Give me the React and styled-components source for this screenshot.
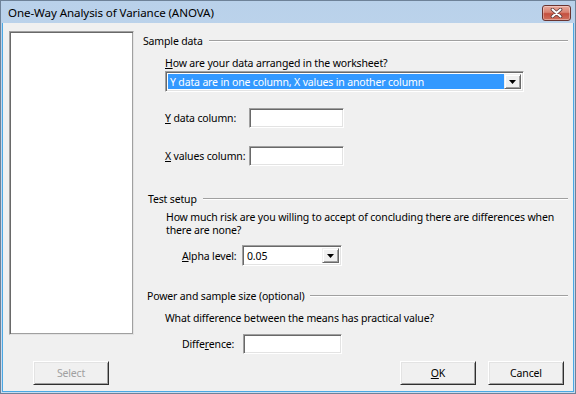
import React from 'react';
import styled, { createGlobalStyle } from 'styled-components';

const Global = createGlobalStyle`
  html, body { margin: 0; padding: 0; background: #fff; }
  body { font-family: "Noto Sans", "DejaVu Sans", sans-serif; color: #000; }
  u { text-decoration: underline; text-underline-offset: 1px; }
`;

const Window = styled.div`
  width: 576px;
  height: 394px;
  box-sizing: border-box;
  border: 1px solid #6e8298;
  padding: 0 1px 1px;
  background: linear-gradient(#b9d1ea, #c3d7ed 30%, #cadcf0);
  display: flex;
  flex-direction: column;
  overflow: hidden;
`;

const TitleBar = styled.div`
  height: 22px;
  flex: none;
  display: flex;
  align-items: center;
  justify-content: space-between;
  padding: 0 3px 0 6px;
`;

const Title = styled.div`
  font-size: 11.6px;
  line-height: 16px;
  padding-top: 2px;
  letter-spacing: -0.1px;
`;

const CloseButton = styled.div`
  width: 29px;
  height: 16px;
  box-sizing: border-box;
  border: 1px solid #6a3430;
  border-radius: 3px;
  background: linear-gradient(#e9aa9d, #d88271 45%, #c4503f 55%, #d0705d);
  box-shadow: inset 0 0 0 1px rgba(255, 255, 255, 0.35);
  display: flex;
  align-items: center;
  justify-content: center;
  margin-top: 2px;
`;

const Client = styled.div`
  flex: 1;
  min-height: 0;
  background: #f0f0f0;
  border: 1px solid #4aa8e4;
  border-top: none;
  display: flex;
  flex-direction: column;
  font-size: 10.5px;
  letter-spacing: -0.15px;
`;

const Main = styled.div`
  display: flex;
  gap: 9px;
  padding: 8px 5px 0 6px;
`;

const ListBox = styled.div`
  flex: none;
  width: 125px;
  height: 304px;
  box-sizing: border-box;
  background: #fff;
  border: 1px solid;
  border-color: #a0a0a0 #e3e3e3 #e3e3e3 #a0a0a0;
  box-shadow: inset 1px 1px 0 #696969, inset -1px -1px 0 #a0a0a0;
`;

const Form = styled.div`
  flex: 1;
  display: flex;
  flex-direction: column;
`;

const SectionHeader = styled.div`
  display: flex;
  align-items: center;
  gap: 6px;
  line-height: 14px;
  height: 14px;
  margin-top: ${p => p.$top}px;
  padding-left: ${p => p.$indent || 0}px;
  white-space: nowrap;
`;

const Rule = styled.div`
  flex: 1;
  height: 0;
  border-top: 1px solid #a0a0a0;
  border-bottom: 1px solid #fff;
`;

const Prompt = styled.div`
  margin-top: ${p => p.$top}px;
  padding-left: ${p => p.$indent}px;
  line-height: ${p => p.$lh || 14}px;
  white-space: nowrap;
`;

const Sunken = styled.div`
  box-sizing: border-box;
  background: #fff;
  border: 1px solid;
  border-color: #a0a0a0 #fff #fff #a0a0a0;
  box-shadow: inset 1px 1px 0 #696969, inset -1px -1px 0 #e3e3e3;
`;

const Combo = styled(Sunken)`
  flex: none;
  width: ${p => p.$w}px;
  height: 21px;
  display: flex;
  align-items: stretch;
  padding: 2px;
  margin-top: ${p => p.$top || 0}px;
  margin-left: ${p => p.$left || 0}px;
`;

const ComboValue = styled.div`
  flex: 1;
  display: flex;
  align-items: center;
  padding-left: 2px;
  background: ${p => (p.$selected ? '#3399ff' : '#fff')};
  color: ${p => (p.$selected ? '#fff' : '#000')};
  white-space: nowrap;
  overflow: hidden;
`;

const DropButton = styled.div`
  flex: none;
  width: 17px;
  box-sizing: border-box;
  background: #f0f0f0;
  border: 1px solid;
  border-color: #f0f0f0 #696969 #696969 #f0f0f0;
  box-shadow: inset 1px 1px 0 #fff, inset -1px -1px 0 #a0a0a0;
  display: flex;
  align-items: center;
  justify-content: center;
`;

const FieldRow = styled.div`
  display: flex;
  align-items: center;
  margin-top: ${p => p.$top}px;
  padding-left: ${p => p.$indent}px;
`;

const Label = styled.div`
  flex: none;
  width: ${p => p.$w}px;
  line-height: 14px;
  white-space: nowrap;
`;

const Input = styled(Sunken)`
  flex: none;
  width: ${p => p.$w}px;
  height: 20px;
`;

const ButtonRow = styled.div`
  display: flex;
  gap: 12px;
  margin-top: 7px;
  padding: 0 9px 0 30px;
`;

const Spacer = styled.div`
  flex: 1;
`;

const Button = styled.div`
  width: 76px;
  height: 24px;
  box-sizing: border-box;
  background: #f0f0f0;
  border: 1px solid;
  border-color: #fff #2f2f2f #2f2f2f #fff;
  box-shadow: inset 1px 1px 0 #e3e3e3, inset -1px -1px 0 #a0a0a0;
  display: flex;
  align-items: center;
  justify-content: center;
  color: ${p => (p.$disabled ? '#a0a0a0' : '#000')};
`;

const Arrow = () => (
  <svg width="7" height="4" viewBox="0 0 7 4">
    <path d="M0 0h7L3.5 4z" fill="#000" />
  </svg>
);

const CloseX = () => (
  <svg width="13" height="10" viewBox="0 0 13 10">
    <path d="M2.5 1.5l8 7M10.5 1.5l-8 7" stroke="#5b3a3a" strokeWidth="3.6" strokeLinecap="round" />
    <path d="M2.5 1.5l8 7M10.5 1.5l-8 7" stroke="#fff" strokeWidth="2" strokeLinecap="round" />
  </svg>
);

export default function App() {
  return (
    <>
      <Global />
      <Window>
        <TitleBar>
          <Title>One-Way Analysis of Variance (ANOVA)</Title>
          <CloseButton>
            <CloseX />
          </CloseButton>
        </TitleBar>
        <Client>
          <Main>
            <ListBox />
            <Form>
              <SectionHeader $top={3}>
                <span>Sample data</span>
                <Rule />
              </SectionHeader>
              <Prompt $top={8} $indent={22}>
                <u>H</u>ow are your data arranged in the worksheet?
              </Prompt>
              <Combo $w={359} $left={22} $top={1}>
                <ComboValue $selected>Y data are in one column, X values in another column</ComboValue>
                <DropButton>
                  <Arrow />
                </DropButton>
              </Combo>
              <FieldRow $top={16} $indent={22}>
                <Label $w={84}>
                  <u>Y</u> data column:
                </Label>
                <Input $w={95} />
              </FieldRow>
              <FieldRow $top={18} $indent={22}>
                <Label $w={84}>
                  <u>X</u> values column:
                </Label>
                <Input $w={95} />
              </FieldRow>
              <SectionHeader $top={26} $indent={5}>
                <span>Test setup</span>
                <Rule />
              </SectionHeader>
              <Prompt $top={5} $indent={23} $lh={13}>
                How much risk are you willing to accept of concluding there are differences when
                <br />
                there are none?
              </Prompt>
              <FieldRow $top={8} $indent={39}>
                <Label $w={60}>
                  <u>A</u>lpha level:
                </Label>
                <Combo $w={100}>
                  <ComboValue>0.05</ComboValue>
                  <DropButton>
                    <Arrow />
                  </DropButton>
                </Combo>
              </FieldRow>
              <SectionHeader $top={23} $indent={4}>
                <span>Power and sample size (optional)</span>
                <Rule />
              </SectionHeader>
              <Prompt $top={8} $indent={22}>
                What difference between the means has practical value?
              </Prompt>
              <FieldRow $top={9} $indent={39}>
                <Label $w={61}>
                  Diffe<u>r</u>ence:
                </Label>
                <Input $w={99} />
              </FieldRow>
            </Form>
          </Main>
          <ButtonRow>
            <Button $disabled>Select</Button>
            <Spacer />
            <Button>
              <u>O</u>K
            </Button>
            <Button>Cancel</Button>
          </ButtonRow>
        </Client>
      </Window>
    </>
  );
}
